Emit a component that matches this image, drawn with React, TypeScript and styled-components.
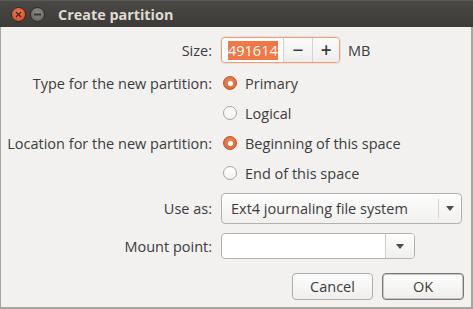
import React from "react";
import styled, { createGlobalStyle } from "styled-components";

const Global = createGlobalStyle`
  html, body { margin: 0; padding: 0; background: #f2f1f0; }
  body { font-family: "Open Sans", "Liberation Sans", sans-serif; }
  * { box-sizing: border-box; }
`;

const Window = styled.div`
  width: 473px;
  height: 309px;
  display: flex;
  flex-direction: column;
  background: #f2f1f0;
  border-left: 1px solid #a6a5a1;
  border-right: 2px solid #a6a5a1;
  border-bottom: 2px solid #a6a5a1;
  font-size: 14.5px;
  color: #3c3c3c;
`;

const TitleBar = styled.div`
  height: 27px;
  flex: none;
  display: flex;
  align-items: center;
  padding-left: 11px;
  background: linear-gradient(#4a4945, #3c3b37);
  border-top: 1px solid #5a5955;
  margin-left: -1px;
  margin-right: -2px;
`;

const WinButton = styled.div<{ $kind: "close" | "min" }>`
  width: 15px;
  height: 15px;
  border-radius: 50%;
  display: flex;
  align-items: center;
  justify-content: center;
  margin-right: 4px;
  background: ${(p) =>
    p.$kind === "close"
      ? "radial-gradient(circle at 50% 35%, #f3774a, #d8461f)"
      : "radial-gradient(circle at 50% 35%, #8a8985, #63625e)"};
  border: 1px solid #2e2d2a;
`;

const Title = styled.div`
  margin-left: 9px;
  font-weight: bold;
  font-size: 14.4px;
  color: #dfdbd2;
`;

const Body = styled.div`
  display: flex;
  flex-direction: column;
  padding-top: 10px;
`;

const Row = styled.div<{ $h: number; $mt?: number }>`
  display: grid;
  grid-template-columns: 211px 1fr;
  column-gap: 9px;
  align-items: center;
  height: ${(p) => p.$h}px;
  margin-top: ${(p) => p.$mt ?? 0}px;
`;

const Label = styled.div`
  text-align: right;
  white-space: nowrap;
`;

const Cell = styled.div`
  display: flex;
  align-items: center;
  height: 100%;
  white-space: nowrap;
`;

const Spin = styled.div`
  display: flex;
  width: 119px;
  height: 26px;
  border: 1px solid #e9a07f;
  border-radius: 4px;
  background: #fff;
  overflow: hidden;
  box-shadow: 0 0 0 1px rgba(240, 119, 70, 0.15);
`;

const SpinEntry = styled.div`
  width: 61px;
  display: flex;
  align-items: center;
  padding-left: 6px;
`;

const Selected = styled.span`
  background: #f07746;
  color: #fff;
  line-height: 19px;
`;

const SpinBtn = styled.div<{ $w: number }>`
  width: ${(p) => p.$w}px;
  border-left: 1px solid #d5d3cf;
  display: flex;
  align-items: center;
  justify-content: center;
  background: linear-gradient(#fbfbfa, #efeeed);
  font-size: 19px;
  font-weight: 600;
  color: #3c3c3c;
`;

const Unit = styled.span`
  margin-left: 8px;
`;

const Radio = styled.div<{ $checked?: boolean }>`
  width: 14px;
  height: 14px;
  border-radius: 50%;
  margin-left: 2px;
  margin-right: 8px;
  display: flex;
  align-items: center;
  justify-content: center;
  border: 1px solid ${(p) => (p.$checked ? "#b9532c" : "#a8a6a2")};
  background: ${(p) =>
    p.$checked
      ? "radial-gradient(circle at 50% 40%, #f08a5d, #dc5e2e)"
      : "linear-gradient(#ffffff, #f3f2f1)"};
  &::after {
    content: "";
    display: ${(p) => (p.$checked ? "block" : "none")};
    width: 5px;
    height: 5px;
    border-radius: 50%;
    background: #fff;
  }
`;

const Combo = styled.div<{ $w: number; $h: number; $entry?: boolean }>`
  width: ${(p) => p.$w}px;
  height: ${(p) => p.$h}px;
  display: flex;
  border: 1px solid #b5b2ad;
  border-radius: 4px;
  background: ${(p) => (p.$entry ? "#fff" : "linear-gradient(#fdfdfd, #f1f0ef)")};
  overflow: hidden;
`;

const ComboText = styled.div`
  flex: 1;
  display: flex;
  align-items: center;
  padding-left: 9px;
`;

const ComboArrow = styled.div<{ $w: number; $entry?: boolean }>`
  width: ${(p) => p.$w}px;
  position: relative;
  display: flex;
  align-items: center;
  justify-content: center;
  background: ${(p) => (p.$entry ? "linear-gradient(#fdfdfd, #f1f0ef)" : "transparent")};
  border-left: ${(p) => (p.$entry ? "1px solid #cfccc8" : "none")};
  &::before {
    content: "";
    display: ${(p) => (p.$entry ? "none" : "block")};
    position: absolute;
    left: 0;
    top: 5px;
    bottom: 5px;
    width: 1px;
    background: #d7d4d0;
  }
`;

const Footer = styled.div`
  display: flex;
  justify-content: flex-end;
  gap: 9px;
  padding-right: 7px;
  margin-top: 14px;
`;

const Button = styled.div<{ $default?: boolean }>`
  width: ${(p) => (p.$default ? 82 : 81)}px;
  height: 27px;
  display: flex;
  align-items: center;
  justify-content: center;
  border-radius: 4px;
  border: 1px solid ${(p) => (p.$default ? "#7a7875" : "#b1aea9")};
  box-shadow: ${(p) => (p.$default ? "inset 0 0 0 1px #c9c6c2" : "none")};
  background: linear-gradient(#fdfdfd, #efeeed);
`;

const Arrow = () => (
  <svg width="8" height="5" viewBox="0 0 8 5">
    <path d="M0 0 H8 L4 5 Z" fill="#4c4c4c" />
  </svg>
);

export default function App() {
  return (
    <>
      <Global />
      <Window>
        <TitleBar>
          <WinButton $kind="close">
            <svg width="7" height="7" viewBox="0 0 7 7">
              <path d="M1 1 L6 6 M6 1 L1 6" stroke="#3a2a20" strokeWidth="1.4" />
            </svg>
          </WinButton>
          <WinButton $kind="min">
            <svg width="7" height="3" viewBox="0 0 7 3">
              <rect x="0" y="0.5" width="7" height="2" fill="#3a3935" />
            </svg>
          </WinButton>
          <Title>Create partition</Title>
        </TitleBar>
        <Body>
          <Row $h={26}>
            <Label>Size:</Label>
            <Cell>
              <Spin>
                <SpinEntry>
                  <Selected>491614</Selected>
                </SpinEntry>
                <SpinBtn $w={30}>−</SpinBtn>
                <SpinBtn $w={27}>+</SpinBtn>
              </Spin>
              <Unit>MB</Unit>
            </Cell>
          </Row>
          <Row $h={30} $mt={5}>
            <Label>Type for the new partition:</Label>
            <Cell>
              <Radio $checked />
              Primary
            </Cell>
          </Row>
          <Row $h={30}>
            <Label />
            <Cell>
              <Radio />
              Logical
            </Cell>
          </Row>
          <Row $h={30}>
            <Label>Location for the new partition:</Label>
            <Cell>
              <Radio $checked />
              Beginning of this space
            </Cell>
          </Row>
          <Row $h={30}>
            <Label />
            <Cell>
              <Radio />
              End of this space
            </Cell>
          </Row>
          <Row $h={31} $mt={5}>
            <Label>Use as:</Label>
            <Cell>
              <Combo $w={241} $h={31}>
                <ComboText>Ext4 journaling file system</ComboText>
                <ComboArrow $w={23}>
                  <Arrow />
                </ComboArrow>
              </Combo>
            </Cell>
          </Row>
          <Row $h={26} $mt={9}>
            <Label>Mount point:</Label>
            <Cell>
              <Combo $w={194} $h={26} $entry>
                <ComboText />
                <ComboArrow $w={29} $entry>
                  <Arrow />
                </ComboArrow>
              </Combo>
            </Cell>
          </Row>
          <Footer>
            <Button>Cancel</Button>
            <Button $default>OK</Button>
          </Footer>
        </Body>
      </Window>
    </>
  );
}
